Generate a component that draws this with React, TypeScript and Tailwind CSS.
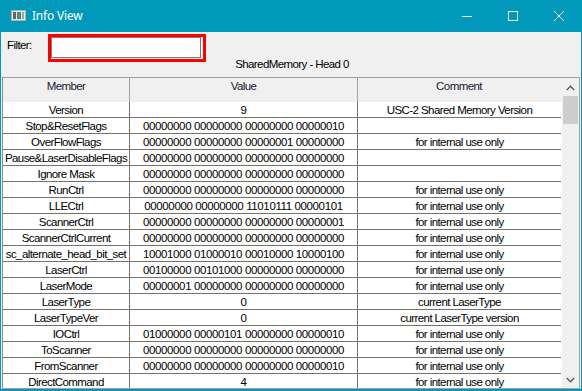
import React from "react";

type Row = { m: string; v: string; c: string };

const rows: Row[] = [
  { m: "Version", v: "9", c: "USC-2 Shared Memory Version" },
  { m: "Stop&ResetFlags", v: "00000000 00000000 00000000 00000010", c: "" },
  { m: "OverFlowFlags", v: "00000000 00000000 00000001 00000000", c: "for internal use only" },
  { m: "Pause&LaserDisableFlags", v: "00000000 00000000 00000000 00000000", c: "" },
  { m: "Ignore Mask", v: "00000000 00000000 00000000 00000000", c: "" },
  { m: "RunCtrl", v: "00000000 00000000 00000000 00000000", c: "for internal use only" },
  { m: "LLECtrl", v: "00000000 00000000 11010111 00000101", c: "for internal use only" },
  { m: "ScannerCtrl", v: "00000000 00000000 00000000 00000001", c: "for internal use only" },
  { m: "ScannerCtrlCurrent", v: "00000000 00000000 00000000 00000000", c: "for internal use only" },
  { m: "sc_alternate_head_bit_set", v: "10001000 01000010 00010000 10000100", c: "for internal use only" },
  { m: "LaserCtrl", v: "00100000 00101000 00000000 00000000", c: "for internal use only" },
  { m: "LaserMode", v: "00000001 00000000 00000000 00000000", c: "for internal use only" },
  { m: "LaserType", v: "0", c: "current LaserType" },
  { m: "LaserTypeVer", v: "0", c: "current LaserType version" },
  { m: "IOCtrl", v: "01000000 00000101 00000000 00000010", c: "for internal use only" },
  { m: "ToScanner", v: "00000000 00000000 00000000 00000000", c: "for internal use only" },
  { m: "FromScanner", v: "00000000 00000000 00000000 00000010", c: "for internal use only" },
  { m: "DirectCommand", v: "4", c: "for internal use only" },
];

function AppIcon() {
  return (
    <svg width="15" height="11" viewBox="0 0 15 11">
      <rect x="0.5" y="0.5" width="14" height="10" fill="#e6e6e6" stroke="#b4b4b4" />
      <rect x="2" y="2" width="3" height="7" fill="#5d6b6b" />
      <rect x="6" y="2" width="4" height="7" fill="#4e8d7e" />
      <rect x="11" y="2" width="2" height="7" fill="#9aa9a9" />
    </svg>
  );
}

export default function App() {
  return (
    <div className="w-[582px] h-[391px] bg-[#0099bc] flex flex-col overflow-hidden font-['Liberation_Sans',Arial,sans-serif] text-[11.5px] text-black tracking-[-0.58px]">
      {/* Title bar */}
      <div className="h-[32px] shrink-0 flex items-center">
        <div className="ml-[11px] mt-[-1px] flex">
          <AppIcon />
        </div>
        <span className="ml-[6px] text-white text-[12px] tracking-[-0.2px] font-['Noto_Sans','Open_Sans',sans-serif] leading-none mt-[-1px]">
          Info View
        </span>
        <div className="ml-auto flex h-full">
          <div className="w-[46px] h-full flex items-center justify-center">
            <svg width="10" height="10" viewBox="0 0 10 10">
              <line x1="0" y1="5.5" x2="10" y2="5.5" stroke="white" strokeWidth="1" />
            </svg>
          </div>
          <div className="w-[46px] h-full flex items-center justify-center">
            <svg width="10" height="10" viewBox="0 0 10 10">
              <rect x="0.5" y="0.5" width="9" height="9" fill="none" stroke="white" strokeWidth="1" />
            </svg>
          </div>
          <div className="w-[46px] h-full flex items-center justify-center">
            <svg width="10" height="10" viewBox="0 0 10 10">
              <line x1="0" y1="0" x2="10" y2="10" stroke="white" strokeWidth="1" />
              <line x1="10" y1="0" x2="0" y2="10" stroke="white" strokeWidth="1" />
            </svg>
          </div>
        </div>
      </div>

      {/* Body */}
      <div className="mx-[1px] mb-[2px] flex-1 min-h-0 bg-[#f0f0f0] flex flex-col">
        {/* Filter row */}
        <div className="h-[25px] shrink-0 flex items-start">
          <div className="w-[47px] pl-[6px] pt-[7px] leading-[13px]">Filter:</div>
          <div className="mt-[2px] w-[158px] h-[28px] border-[3px] border-[#ff0000] bg-[#f0f0f0] shrink-0">
            <div className="w-[150px] h-[21px] bg-white border border-[#7a7a7a]" />
          </div>
        </div>
        {/* Heading */}
        <div className="h-[14px] shrink-0 leading-[14px] text-center pl-[2px]">SharedMemory - Head 0</div>

        {/* Grid */}
        <div className="mt-[6px] mx-[1px] flex-1 min-h-0 border border-[#a0a0a0] border-l-[#8c8c8c] bg-white flex overflow-hidden">
          <div className="flex-1 min-w-0 flex flex-col overflow-hidden">
            <div className="h-[24px] shrink-0 flex bg-[#f0f0f0]">
              <div className="w-[127px] shrink-0 border-r border-[#a0a0a0] text-center pt-[2px] leading-[13px] text-[#1a1a2e]">
                Member
              </div>
              <div className="w-[228px] shrink-0 border-r border-[#a0a0a0] text-center pt-[2px] leading-[13px] text-[#1a1a2e]">
                Value
              </div>
              <div className="flex-1 text-center pt-[2px] leading-[13px] text-[#1a1a2e] pr-[2px]">Comment</div>
            </div>
            {rows.map((r, i) => (
              <div key={i} className="h-[16px] shrink-0 flex">
                <div className="w-[127px] shrink-0 border-r border-b border-[#74746c] flex items-center justify-center overflow-hidden whitespace-nowrap leading-[15px] pt-[1px]">
                  {r.m}
                </div>
                <div className="w-[228px] shrink-0 border-r border-b border-[#74746c] flex items-center justify-center overflow-hidden whitespace-nowrap leading-[15px] pt-[1px] tracking-[-0.38px]">
                  {r.v}
                </div>
                <div className="w-[203px] shrink-0 border-b border-[#74746c] flex items-center justify-center overflow-hidden whitespace-nowrap leading-[15px] pt-[1px]">
                  {r.c}
                </div>
              </div>
            ))}
          </div>

          {/* Scrollbar */}
          <div className="w-[17px] shrink-0 bg-[#f0f0f0] flex flex-col">
            <div className="h-[17px] shrink-0 flex items-center justify-center pt-[3px]">
              <svg width="9" height="6" viewBox="0 0 9 6">
                <polyline points="0.8,5 4.5,1.3 8.2,5" fill="none" stroke="#606060" strokeWidth="1.6" />
              </svg>
            </div>
            <div className="mt-[1px] ml-[1px] w-[15px] h-[28px] bg-[#cdcdcd]" />
            <div className="flex-1" />
            <div className="h-[17px] shrink-0 flex items-center justify-center pt-[1px]">
              <svg width="9" height="6" viewBox="0 0 9 6">
                <polyline points="0.8,1 4.5,4.7 8.2,1" fill="none" stroke="#606060" strokeWidth="1.6" />
              </svg>
            </div>
          </div>
        </div>
      </div>
    </div>
  );
}
